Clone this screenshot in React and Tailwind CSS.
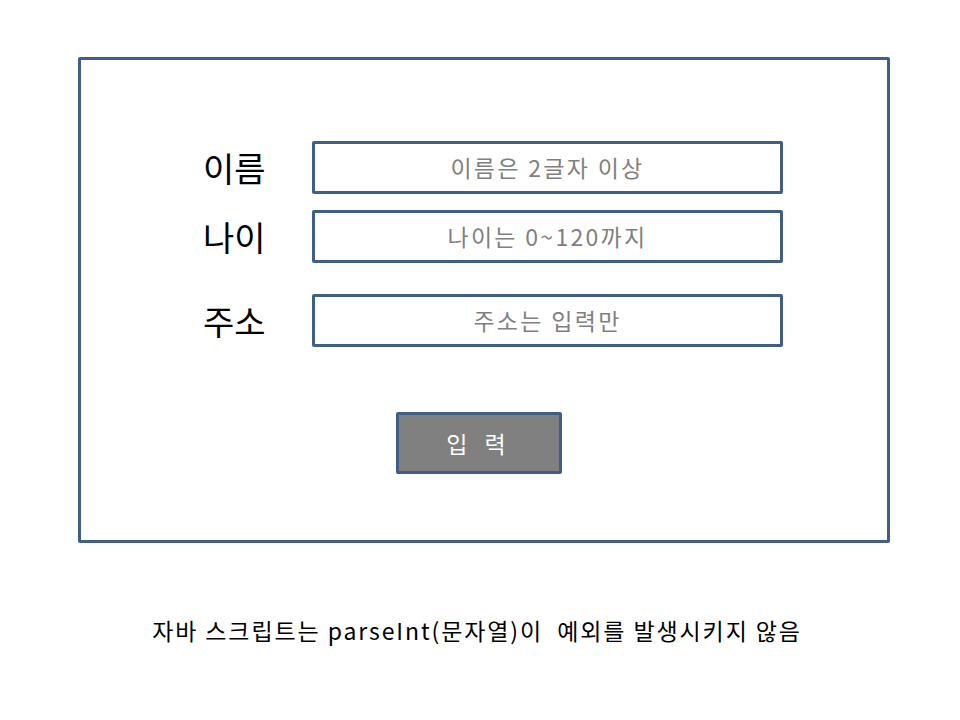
import React from 'react';

const fields = [
  { label: '이름', hint: '이름은 2글자 이상', gap: 'mt-0' },
  { label: '나이', hint: '나이는 0~120까지', gap: 'mt-[16px]' },
  { label: '주소', hint: '주소는 입력만', gap: 'mt-[31px]' },
];

function Field({ label, hint, gap }) {
  return (
    <div className={`flex items-center ${gap}`}>
      <span className="w-[109px] text-[34px] leading-none text-black">{label}</span>
      <div className="w-[471px] h-[53px] border-[3px] border-[#3f5f8a] rounded-[2px] flex items-center justify-center text-[23px] tracking-[2.3px] text-[#7f7f7f]">
        {hint}
      </div>
    </div>
  );
}

export default function App() {
  return (
    <div
      className="w-[960px] h-[720px] bg-white pt-[57px] pl-[78px]"
      style={{ fontFamily: '"Noto Sans CJK KR", "Noto Sans", sans-serif' }}
    >
      <div className="w-[812px] h-[486px] border-[3px] border-[#3f5f8a] rounded-[2px] pt-[81px] pl-[122px]">
        {fields.map((f) => (
          <Field key={f.label} {...f} />
        ))}
        <div className="mt-[65px] ml-[193px] w-[166px] h-[62px] bg-[#808080] border-[3px] border-[#3f5f8a] rounded-[2px] flex items-center justify-center text-[23px] text-white tracking-[6px]">
          입 력
        </div>
      </div>
      <p className="-ml-[78px] mt-[70px] w-[954px] text-center text-[23px] tracking-[1.9px] text-black">
        자바 스크립트는 parseInt(문자열)이&nbsp; 예외를 발생시키지 않음
      </p>
    </div>
  );
}
